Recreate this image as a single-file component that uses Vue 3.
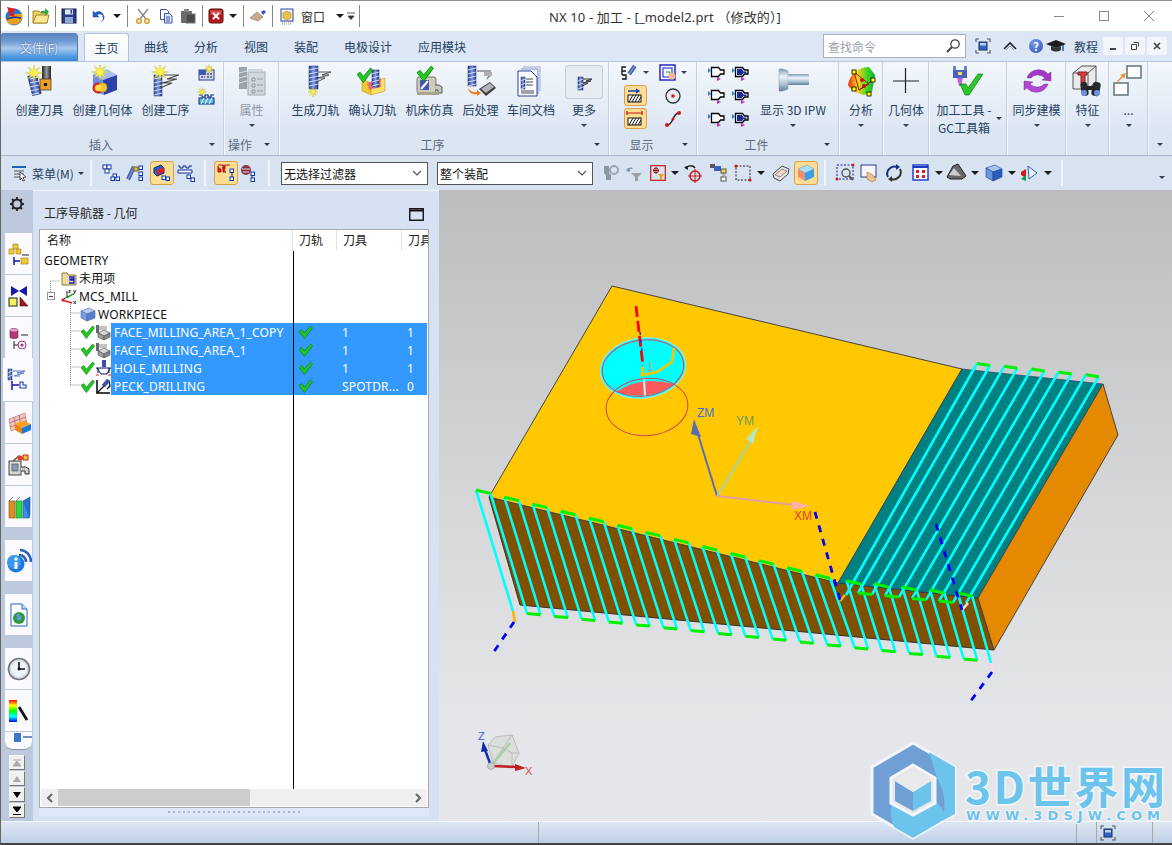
<template>
  <div class="nx-window">
    <svg class="defs" width="0" height="0">
      <defs>
        <linearGradient id="gBlue" x1="0" y1="0" x2="1" y2="0"><stop offset="0" stop-color="#2c3f90"/><stop offset=".5" stop-color="#7f9be6"/><stop offset="1" stop-color="#24357c"/></linearGradient>
        <linearGradient id="gDark" x1="0" y1="0" x2="1" y2="0"><stop offset="0" stop-color="#222"/><stop offset=".5" stop-color="#999"/><stop offset="1" stop-color="#222"/></linearGradient>
        <linearGradient id="gSteel" x1="0" y1="0" x2="0" y2="1"><stop offset="0" stop-color="#7f9cb0"/><stop offset=".35" stop-color="#eef5fa"/><stop offset=".7" stop-color="#a8c0d0"/><stop offset="1" stop-color="#5f8096"/></linearGradient>
        <linearGradient id="gHeat" x1="0" y1="0" x2="1" y2="0"><stop offset="0" stop-color="#e62a10"/><stop offset=".35" stop-color="#ffd020"/><stop offset=".7" stop-color="#40d820"/><stop offset="1" stop-color="#10a840"/></linearGradient>
        <linearGradient id="gRainbow" x1="0" y1="0" x2="0" y2="1"><stop offset="0" stop-color="#f00"/><stop offset=".25" stop-color="#ff0"/><stop offset=".5" stop-color="#0f0"/><stop offset=".75" stop-color="#0ff"/><stop offset="1" stop-color="#00f"/></linearGradient>
      </defs>
    </svg>

    <header class="titlebar">
      <div class="qat">
        <template v-for="(q, i) in quickItems" :key="i">
          <span v-if="q.t === 'sep'" class="qsep" :style="{ width: q.w + 'px' }"><i></i></span>
          <span v-else-if="q.t === 'caret'" class="slot" :style="{ width: q.w + 'px' }"><b class="caret"></b></span>
          <span v-else-if="q.t === 'text'" class="qtext">{{ q.text }}</span>
          <span v-else class="slot" :style="{ width: q.w + 'px' }"><Ic :name="q.icon" /></span>
        </template>
      </div>
      <div class="title">NX 10 - 加工 - [_model2.prt （修改的）]</div>
      <div class="win-controls">
        <span class="wc"><svg width="12" height="12"><path d="M1 6.5h10" stroke="#888" /></svg></span>
        <span class="wc"><svg width="12" height="12"><rect x="1.5" y="1.5" width="9" height="9" fill="none" stroke="#888" /></svg></span>
        <span class="wc"><svg width="12" height="12"><path d="M1 1l10 10M11 1L1 11" stroke="#888" /></svg></span>
      </div>
    </header>

    <nav class="tabbar">
      <div class="file-btn">文件(F)</div>
      <div class="tabs">
        <span v-for="t in tabs" :key="t" class="tab" :class="{ active: t === '主页' }">{{ t }}</span>
      </div>
      <div class="tab-right">
        <div class="search">
          <span>查找命令</span>
          <svg width="16" height="16" viewBox="0 0 16 16" fill="none">
            <circle cx="10" cy="6" r="4.2" stroke="#444" stroke-width="1.3" fill="#fff" />
            <path d="M7 9l-5 5" stroke="#444" stroke-width="2" />
          </svg>
        </div>
        <span class="tr-ic first"><Ic name="frame" /></span>
        <span class="tr-ic chev"><svg width="14" height="10" viewBox="0 0 14 10" fill="none"><path d="M1 8l6-6 6 6" stroke="#222" stroke-width="1.6" /><path d="M3 9l4-4 4 4" stroke="#999" /></svg></span>
        <span class="tr-ic help">?</span>
        <span class="tr-ic hat"><Ic name="hat" /></span>
        <span class="tut">教程</span>
        <span class="mini"><svg width="10" height="10"><path d="M2 8h6" stroke="#444" stroke-width="2" /></svg></span>
        <span class="mini"><svg width="10" height="10" fill="none"><path d="M3.5 1.5h5v4M1.5 3.5h5v5h-5z" stroke="#444" /></svg></span>
        <span class="mini"><svg width="10" height="10"><path d="M2 2l6 6M8 2l-6 6" stroke="#444" stroke-width="1.7" /></svg></span>
      </div>
    </nav>

    <section class="ribbon">
      <div v-for="g in groups" :key="g.id" class="group" :class="{ nosep: g.last }" :style="{ width: g.w + 'px' }">
        <div class="group-body" :style="{ paddingLeft: (g.pad || 0) + 'px' }">
          <template v-for="(it, n) in g.items" :key="n">
            <div v-if="it.grid" class="small-grid" :style="{ width: it.w + 'px', gridTemplateColumns: it.cols }">
              <span v-for="(c, k) in it.grid" :key="k" class="cell" :class="{ on: c.on }">
                <Ic :name="c.icon" /><b v-if="c.caret" class="caret sm"></b>
              </span>
            </div>
            <div v-else class="big" :class="{ dim: it.dim, two: it.lines }" :style="{ width: it.w + 'px' }">
              <span class="big-ic" :class="{ boxed: it.boxed }"><Ic :name="it.icon" /></span>
              <span v-if="it.lines" class="big-label">{{ it.lines[0] }}<br />{{ it.lines[1] }}</span>
              <span v-else class="big-label">{{ it.label }}</span>
              <b v-if="it.caret" class="caret sm"></b>
            </div>
          </template>
        </div>
        <div class="group-foot">
          <span class="foot-label">{{ g.label }}</span>
          <b v-if="g.launcher" class="caret sm launcher"></b>
        </div>
      </div>
    </section>

    <section class="toolbar">
      <div class="menu-btn"><Ic name="menu" /><span>菜单(M)</span><b class="caret sm"></b></div>
      <template v-for="(b, i) in toolItems" :key="i">
        <span v-if="b.t === 'sep'" class="tsep" :style="{ width: b.w + 'px' }"><i></i></span>
        <span v-else-if="b.t === 'gap'" :style="{ width: b.w + 'px' }"></span>
        <span v-else-if="b.t === 'caret'" class="slot" :style="{ width: b.w + 'px' }"><b class="caret"></b></span>
        <div v-else-if="b.t === 'select'" class="select" :style="{ width: b.w + 'px' }">
          <span>{{ b.text }}</span>
          <svg width="12" height="8" viewBox="0 0 12 8" fill="none"><path d="M2 2l4 4 4-4" stroke="#555" stroke-width="1.2" /></svg>
        </div>
        <span v-else class="slot" :class="{ on: b.on }" :style="{ width: b.w + 'px' }"><Ic :name="b.icon" /></span>
      </template>
      <b class="caret sm tb-end"></b>
    </section>

    <main class="workspace">
      <aside class="rail">
        <div class="gear">
          <svg width="18" height="18" viewBox="0 0 18 18" fill="none">
            <circle cx="9" cy="9" r="4.5" stroke="#222" stroke-width="2" />
            <path d="M9 2v2.5M9 13.5V16M2 9h2.5M13.5 9H16M4 4l1.8 1.8M12.2 12.2L14 14M14 4l-1.8 1.8M5.8 12.2L4 14" stroke="#222" stroke-width="1.8" />
          </svg>
        </div>
        <div v-for="r in railItems" :key="r.icon" class="rail-btn" :class="[{ active: r.active }, r.cls]">
          <Ic :name="r.icon" />
        </div>
        <div class="rail-cut"><svg width="28" height="18" viewBox="0 0 28 18"><rect x="9" y="1" width="7" height="9" fill="#3a78d0" /><path d="M18 5h10" stroke="#4a6aa0" stroke-width="1.5" /></svg></div>
        <div class="rail-scroll">
          <span class="rs off"><svg width="10" height="10"><path d="M1 2h8M5 3l-4 5h8z" fill="#aaa" stroke="#aaa" /></svg></span>
          <span class="rs off"><svg width="10" height="10"><path d="M5 2l-4 6h8z" fill="#aaa" /></svg></span>
          <span class="rs"><svg width="10" height="10"><path d="M1 2h8l-4 6z" fill="#000" /></svg></span>
          <span class="rs"><svg width="10" height="10"><path d="M1 1h8l-4 5zM1 8.5h8" fill="#000" stroke="#000" /></svg></span>
        </div>
      </aside>

      <section class="navigator">
        <div class="nav-head">
          <span>工序导航器 - 几何</span>
          <svg width="15" height="13"><rect x=".75" y=".75" width="13.5" height="11.5" fill="none" stroke="#111" stroke-width="1.4" /><path d="M1 2.5h13" stroke="#111" stroke-width="2" /></svg>
        </div>
        <div class="tree">
          <div class="tree-header">
            <span class="th name">名称</span>
            <span class="th path">刀轨</span>
            <span class="th tool">刀具</span>
            <span class="th more">刀具</span>
          </div>
          <div class="tree-body">
            <svg class="tree-lines" width="60" height="140" fill="none">
              <path d="M10.5 30V44M10.5 30H20" stroke="#888" stroke-dasharray="1 1" />
              <path d="M30.5 53V135M30.5 62H40M30.5 80H41M30.5 98H41M30.5 116H41M30.5 134H41" stroke="#888" stroke-dasharray="1 1" />
            </svg>
            <div class="vline"></div>
            <div class="row lv0"><span class="label">GEOMETRY</span></div>
            <div class="row lv1"><Ic name="folder" /><span class="label">未用项</span></div>
            <div class="row lv1b">
              <span class="minus"></span><Ic name="mcs" /><span class="label">MCS_MILL</span>
            </div>
            <div class="row lv2"><Ic name="workpiece" /><span class="label">WORKPIECE</span></div>
            <div v-for="op in operations" :key="op.name" class="row op">
              <Ic name="check" /><Ic :name="op.icon" />
              <div class="sel">
                <span class="op-name">{{ op.name }}</span>
                <span class="op-path"><Ic name="check" /></span>
                <span class="op-tool">{{ op.tool }}</span>
                <span class="op-more">{{ op.more }}</span>
              </div>
            </div>
          </div>
          <div class="hscroll">
            <svg width="8" height="10"><path d="M6 1L2 5l4 4" fill="none" stroke="#666" stroke-width="2" /></svg>
            <div class="track"><div class="thumb"></div></div>
            <svg width="8" height="10"><path d="M2 1l4 4-4 4" fill="none" stroke="#666" stroke-width="2" /></svg>
          </div>
        </div>
        <div class="grip"><i v-for="n in 27" :key="n"></i></div>
      </section>

      <section class="viewport">
        <svg class="scene" viewBox="439 190 733 632" width="733" height="632" fill="none">
          <polygon points="489,497 838,583 978,598 994,650 520,605" fill="#7f5000" stroke="#333" />
          <polygon points="612,286 962,369 838,583 489,497" fill="#ffc800" stroke="#444" />
          <polygon points="962,369 1103,384 978,598 838,583" fill="#008080" stroke="#335" stroke-width=".6" />
          <polygon points="1103,384 1118,435 994,650 978,598" fill="#e58a00" stroke="#444" />

          <path :d="cyanFront" stroke="#00ffff" stroke-width="2.6" stroke-linejoin="round" />
          <path :d="cyanTeal" stroke="#00ffff" stroke-width="2.6" stroke-linejoin="round" />
          <path :d="greenCaps" stroke="#00f000" stroke-width="3" />
          <path d="M513 611L515 622" stroke="#ffb400" stroke-width="2.6" />
          <path d="M840 601L845 595" stroke="#ffb400" stroke-width="2.6" />
          <path d="M991 663L993 672M962 610L968 603" stroke="#ffd8e8" stroke-width="2.6" />
          <path d="M514 622L493 653" stroke="#0000ff" stroke-width="2.8" stroke-dasharray="7 7" />
          <path d="M992 672L970 702" stroke="#0000ff" stroke-width="2.8" stroke-dasharray="7 7" />
          <path d="M815 512L840 600" stroke="#0000ff" stroke-width="2.8" stroke-dasharray="7 7" />
          <path d="M936 524L962 610" stroke="#0000ff" stroke-width="2.8" stroke-dasharray="7 7" />

          <ellipse cx="643" cy="368" rx="43" ry="30" transform="rotate(-8 643 368)" fill="#00ffff" stroke="#90f0f0" />
          <path d="M616 392Q640 375 674 384Q650 402 616 392z" fill="#ff5a5a" />
          <path d="M644 378L645 397" stroke="#bff" stroke-width="2" />
          <ellipse cx="643" cy="368" rx="41" ry="28" transform="rotate(-8 643 368)" stroke="#d84060" />
          <ellipse cx="647" cy="407" rx="41" ry="28.5" transform="rotate(-5 647 407)" stroke="#d84050" />
          <path d="M643 367L642 375L657 372L672 362L674 348" stroke="#ffc000" stroke-width="2.6" />
          <path d="M636 306L643 366" stroke="#ff0000" stroke-width="2.8" stroke-dasharray="11 4" />
          <path d="M640 332L642 352" stroke="#2030d0" stroke-width="1.5" stroke-dasharray="3 5" />
          <text x="647" y="371" class="s-txt" fill="#a8a860">1</text>

          <path d="M717 496L697 431" stroke="#5a6eb8" stroke-width="2" />
          <path d="M694 419L701 437L691 434z" fill="#5a6eb8" />
          <path d="M717 496L751 441" stroke="#8fd6c8" stroke-width="1.6" />
          <path d="M758 426L753 444L746 439z" fill="#b8e8c0" />
          <path d="M717 496L795 505" stroke="#e0a0a0" stroke-width="2" />
          <path d="M811 506L791 510L792 501z" fill="#ffb0a8" />
          <text x="697" y="417" class="s-txt" fill="#3c6ee0">ZM</text>
          <text x="736" y="425" class="s-txt" fill="#6f9a60">YM</text>
          <text x="794" y="520" class="s-txt" fill="#d84040">XM</text>

          <g stroke="#bbb" stroke-width="1" fill="#dcdedc">
            <polygon points="495,737 512,735 519,753 512,767 493,763 488,745" />
            <path d="M503 748L512 735M503 748L512 753L519 753M512 753L512 767M503 748L493 763M503 748L488 745" fill="none" />
          </g>
          <path d="M491 766L510 743" stroke="#a8d0a8" stroke-width="2.5" />
          <path d="M491 766L484 747" stroke="#1030b0" stroke-width="2.5" />
          <path d="M483 741L488 751L481 752z" fill="#1030b0" />
          <path d="M491 766L518 767" stroke="#c02020" stroke-width="2.5" />
          <path d="M526 768L515 771L515 764z" fill="#c02020" />
          <circle cx="491" cy="766" r="3.5" fill="#ccc" stroke="#888" stroke-width=".5" />
          <text x="478" y="740" class="t-txt" fill="#3a60e0">Z</text>
          <text x="525" y="775" class="t-txt" fill="#d05050">X</text>
        </svg>
      </section>
    </main>

    <footer class="statusbar">
      <span class="st one"></span>
      <span class="st two"></span>
      <span class="st three"></span>
      <span class="st four"><Ic name="frame" /></span>
    </footer>

    <svg class="watermark" width="312" height="110" viewBox="860 735 312 110">
      <polygon points="913,743 955,767 955,814 913,838 872,814 872,767" fill="#6f9fd4" stroke="#f2f6fa" stroke-width="3" />
      <path d="M929 752L955 767V814L942 821Q949 798 937 778z" fill="#6cc4ec" />
      <path d="M892 803L913 815L936 802Q950 814 940 822L913 838L894 827Q889 815 892 803z" fill="#6cc4ec" />
      <polygon points="913,765 935,778 935,803 913,815 891,803 891,778" fill="#e6e7ea" stroke="#f4f7fa" stroke-width="3" />
      <polygon points="913,792 895,781 895,801 913,811" fill="#6f9fd4" />
      <polygon points="913,792 931,781 931,801 913,811" fill="#6cc4ec" />
      <polygon points="913,771 931,781 913,792 895,781" fill="#e8eaec" />
      <text class="wm-big" x="965" y="804" textLength="200">3D世界网</text>
      <text class="wm-small" x="966" y="820" textLength="194">WWW.3DSJW.COM</text>
    </svg>
  </div>
</template>

<script setup>
import { h, computed } from 'vue'

// little drawing helpers for the bitmap-style NX icons
const star = (x, y, r) => {
  const p = []
  for (let i = 0; i < 16; i++) {
    const a = (i * Math.PI) / 8
    const q = i % 2 ? r * 0.36 : r
    p.push((x + q * Math.cos(a)).toFixed(1) + ',' + (y + q * Math.sin(a)).toFixed(1))
  }
  return `<polygon points="${p.join(' ')}" fill="#fff24a" stroke="#b8b030" stroke-width=".4"/>`
}
const mill = (x, y, w, hh) => {
  let s = `<rect x="${x}" y="${y}" width="${w}" height="${hh}" fill="url(#gBlue)" stroke="#1e2c6a" stroke-width=".5"/>`
  for (let yy = y + 3; yy < y + hh; yy += 4) s += `<path d="M${x} ${yy + 1}L${x + w} ${yy - 1}" stroke="#dfe8ff" stroke-width=".9"/>`
  return s
}
const check = (x, y, k = 1) => `<path transform="translate(${x} ${y}) scale(${k})" d="M0 6l3-2 3 4 7-8 2 2-9 12z" fill="#20c820" stroke="#0a7a0a" stroke-width=".7"/>`
const gnode = (x, y) => `<rect x="${x}" y="${y}" width="3.5" height="3.5" fill="#fff" stroke="#0a3ab0"/>`
const blank = (inner) => '<path d="M3.5 3.5h7l2 2.5h3.5v4h-3.5l-2 2.5h-7z" fill="#fff" stroke="#000" stroke-width="1.3"/>' + inner

const icons = {
  logo: [20, '<circle cx="10" cy="11" r="8.5" fill="#2276c8"/><path d="M2 13Q9 7 18 8Q19 14 14 18Q7 20 3 16z" fill="#e8a020"/><path d="M3 13Q10 10 17 12" stroke="#103a90" stroke-width="1.5" fill="none"/><path d="M3 1l9 2-3 3 2 5-5-1-1-4z" fill="#e01c28"/>'],
  open: [18, '<path d="M1 4h6l2 2h6v10H1z" fill="#f0d060" stroke="#a88830"/><path d="M1 16l3-8h13l-2 8z" fill="#ffe890" stroke="#a88830"/><path d="M9 4h4V1l4 4-4 4V6H9z" fill="#30a840"/>'],
  save: [16, '<rect x="1" y="1" width="14" height="14" fill="#2a3f80" stroke="#14204c"/><rect x="4" y="1.5" width="8" height="5" fill="#dfe6f4"/><rect x="4" y="9" width="8" height="6" fill="#8fa8d8"/><rect x="9.5" y="2" width="1.6" height="3.5" fill="#2a3f80"/>'],
  undo: [16, '<path d="M2 3v6h6L6 7c3-2 6-1 7 3-.2-6-5-8-9-5z" fill="#2060c8" stroke="#103a80" stroke-width=".4"/><path d="M11 8c2 2 1 5-2 6 3 0 5-3 4-6z" fill="#2060c8"/>'],
  cut: [16, '<path d="M3 1l8 10M13 1L5 11" stroke="#888" stroke-width="1.4"/><circle cx="4" cy="13" r="2.2" fill="none" stroke="#d89a20" stroke-width="1.5"/><circle cx="12" cy="13" r="2.2" fill="none" stroke="#d89a20" stroke-width="1.5"/>'],
  copy: [16, '<path d="M2.5 1.5h6l2 2v8h-8z" fill="#fff" stroke="#3a50a8"/><path d="M6.5 5.5h5l2.5 2.5v7h-7.5z" fill="#e0e8ff" stroke="#3a50a8"/><path d="M8 9h4M8 11h4M8 13h4" stroke="#3a50a8"/>'],
  paste: [16, '<rect x="1" y="3" width="11" height="12" rx="1" fill="#6a6a6a"/><rect x="4" y="1" width="5" height="3" fill="#888"/><rect x="6" y="6" width="9" height="9" fill="#4a4a4a" stroke="#777"/>'],
  closeX: [16, '<rect x="1" y="1" width="14" height="14" rx="2" fill="#b01c1c" stroke="#5c1010"/><rect x="2.5" y="2.5" width="11" height="4" fill="#d85050"/><path d="M5 5l6 6M11 5l-6 6" stroke="#fff" stroke-width="2"/>'],
  brush: [18, '<path d="M1 11l7-6 6 5-5 4z" fill="#c8ad88" stroke="#6a5a48" stroke-width=".5"/><path d="M12 5l3-2 2 2-3 3z" fill="#3050c0"/>'],
  winCube: [18, '<rect x="2" y="2" width="12" height="12" fill="#eef" stroke="#2a4a98"/><path d="M8 4l4 2v5l-4 2-4-2V6z" fill="#f0c040" stroke="#a08020" stroke-width=".5"/><path d="M3 15h11M3 17h9" stroke="#888" stroke-dasharray="1 1"/>'],
  lineCaret: [10, '<path d="M1 2h8M2 5h6l-3 3.5z" fill="#333" stroke="#333" stroke-width=".8"/>'],
  frame: [16, '<path d="M1 4V1h3M12 1h3v3M15 12v3h-3M4 15H1v-3" fill="none" stroke="#555" stroke-width="1.1"/><rect x="4" y="4" width="8" height="8" fill="#2f66c8" stroke="#1a2f60"/><rect x="5" y="5" width="6" height="2.5" fill="#b8d0f4"/>'],
  hat: [20, '<path d="M0 8l10-4 10 4-10 4z" fill="#1c1c1c"/><path d="M5 10v4c3 2 7 2 10 0v-4l-5 2z" fill="#333"/><path d="M17 9v6" stroke="#2050d0" stroke-width="1.5"/>'],

  createTool: [32, mill(6, 10, 9, 20).replace('<rect', '<rect transform="rotate(-14 10 20)"') + '<rect x="18" y="1" width="9" height="15" fill="url(#gDark)"/><rect x="16" y="14" width="11" height="11" fill="#f0a020" stroke="#333" stroke-width=".7"/><circle cx="21.5" cy="19.5" r="1.8" fill="#111"/>' + star(10, 8, 8.5)],
  createGeom: [32, '<polygon points="6,9 20,4 30,10 16,15" fill="#a9c0f0"/><polygon points="16,15 30,10 30,25 17,30" fill="#2c40a8"/><polygon points="6,9 16,15 17,30 6,26" fill="#6f8ce4"/><ellipse cx="11" cy="23" rx="5" ry="5" fill="#f03020" stroke="#b02010"/><rect x="11" y="18" width="9" height="9" rx="4" fill="#f2c830" stroke="#a08020" stroke-width=".5"/><ellipse cx="11" cy="23" rx="3" ry="3" fill="#ffe050"/>' + star(13, 7, 8.5)],
  createOp: [32, mill(4, 10, 8, 21) + '<path d="M11 10h18l-12 4h10l-15 4h10l-12 5" fill="none" stroke="#444" stroke-width="1.1"/>' + star(10, 7, 8.5)],
  insA: [18, '<rect x="2" y="6" width="15" height="10" fill="#cfd8f0" stroke="#2a3f90"/><rect x="2" y="6" width="7" height="5" fill="#3f5ab0"/><path d="M10 10h6M10 13h6M4 13h4" stroke="#111" stroke-dasharray="2 1"/>' + star(12, 5, 4.5)],
  insB: [18, '<path d="M2 8h3v2h3V8h3v2h3V8h3" fill="none" stroke="#0a2a90" stroke-width="1.2"/><rect x="2" y="11" width="15" height="6" fill="#58b8d8" stroke="#0a2a90"/><path d="M4 17l3-6M8 17l3-6M12 17l3-6" stroke="#fff"/>' + star(5, 5, 4.5)],
  attr: [32, '<rect x="3" y="2" width="8" height="22" fill="#9ba4ac"/><path d="M3 8l8-2M3 13l8-2M3 18l8-2" stroke="#d8dde2"/><rect x="12" y="7" width="17" height="23" fill="#d2d8de" stroke="#a4acb4"/><path d="M16 13h3v3h-3zM16 19h3v3h-3zM16 25h3v3h-3zM21 14h6M21 20h6M21 26h6" fill="none" stroke="#909aa4"/><path d="M12 5h15" stroke="#b0b8c0"/>'],
  genPath: [32, mill(9, 1, 9, 23) + '<path d="M18 7h13l-9 3h7l-11 3h7l-8 4" fill="none" stroke="#555"/>' + star(13, 27, 5)],
  confirm: [32, '<polygon points="5,14 14,18 14,30 5,26" fill="#f0c830" stroke="#a89020" stroke-width=".5"/><polygon points="14,18 28,13 28,26 14,30" fill="#ffe060" stroke="#a89020" stroke-width=".5"/><polygon points="10,18 24,13 24,22 12,25" fill="#e84090" opacity=".6"/>' + mill(15, 5, 7, 17) + check(0, 3, 1.05)],
  sim: [32, '<rect x="3" y="12" width="19" height="16" rx="2" fill="#d0cab8" stroke="#777"/><rect x="6" y="15" width="9" height="10" fill="#3f5ab0"/><path d="M7 24l7-8" stroke="#fff" stroke-width="2"/><path d="M21 20h4l3 2v6h-4v-3h-3" fill="#c8c8c0" stroke="#555"/><rect x="3" y="27" width="22" height="3" fill="#a8a490"/>' + check(3, 1, 1.1)],
  post: [32, mill(3, 1, 8, 20) + '<path d="M3 23q3 5 9 4v-2l4 3-4 3v-2q-8 1-9-6z" fill="#f07820"/><path d="M12 6h13v5h-1l-2 3" fill="none" stroke="#888" stroke-width="1.4"/><rect x="19" y="7" width="8" height="4" fill="#b0b0b0"/><polygon points="14,24 25,17 31,23 21,31" fill="#403c38"/><polygon points="16,24 25,18 29,22 21,28" fill="#b0b4ba"/>'],
  doc: [32, '<path d="M8 2h17v24" fill="none" stroke="#a0a8d8"/><path d="M6 4h17v25" fill="none" stroke="#8090d0"/><path d="M3 6h13l6 6v19H3z" fill="#fff" stroke="#2a3f98"/>' + mill(6, 12, 4, 12) + '<path d="M11 14h7M11 17h7M11 20h7M6 26h13M6 28h13" stroke="#445"/>'],
  more: [18, mill(3, 4, 5, 13) + '<path d="M8 6h9l-6 2h5l-8 2h5l-6 3" fill="none" stroke="#333"/>'],
  showA: [18, '<path d="M5 3H1v4h4M1 11h4v4H1" fill="none" stroke="#111" stroke-width="1.3"/><path d="M1 7v4" stroke="#111" stroke-width="1.3"/>' + '<rect x="9" y="1" width="4" height="10" transform="rotate(35 11 6)" fill="url(#gBlue)"/>'],
  showB: [18, '<rect x="1" y="1" width="15" height="15" fill="#f8f8ff" stroke="#1818c8" stroke-width="1.4"/><rect x="4" y="4" width="9" height="9" fill="none" stroke="#1818c8"/><path d="M7 8h4v4" stroke="#20b020" fill="none"/><circle cx="13" cy="12" r="3.5" fill="#f0b890"/>'],
  hatchA: [20, '<path d="M3 5h11M11 3l3 2-3 2" fill="none" stroke="#1040c0" stroke-width="1.3"/><rect x="3" y="9" width="13" height="7" fill="#fff" stroke="#111"/><path d="M4 16l4-7M7 16l4-7M10 16l4-7M13 16l3-5" stroke="#111"/>'],
  hatchB: [20, '<path d="M2 4h15M2 2v4M17 2v4" fill="none" stroke="#d01010" stroke-width="1.2"/><rect x="3" y="9" width="13" height="7" fill="#fff" stroke="#111"/><path d="M4 16l4-7M7 16l4-7M10 16l4-7M13 16l3-5" stroke="#111"/>'],
  target: [18, '<circle cx="9" cy="9" r="7" fill="none" stroke="#333" stroke-width="1.3"/><circle cx="9" cy="9" r="1.8" fill="#d01818"/>'],
  curve: [18, '<path d="M3 15C10 15 8 3 15 3" fill="none" stroke="#222" stroke-width="1.4"/><circle cx="3" cy="15" r="2" fill="#d01818"/><circle cx="15" cy="3" r="2" fill="#d01818"/><circle cx="9" cy="9" r="1.5" fill="#d01818"/>'],
  blankA: [18, blank('<path d="M0 4l3 2.5L0 9z" fill="#2a80d0"/><path d="M9 13l4 2-4 2z" fill="#c030c0"/>')],
  blankB: [18, blank('<path d="M5 5h5l1.5 2.5h3v1.5h-3L10 11H5z" fill="#1c2c90"/><path d="M0 4l3 2.5L0 9z" fill="#2a80d0"/><path d="M9 13l4 2-4 2z" fill="#c030c0"/>')],
  ipw: [32, '<path d="M2 4q3-1 9 2v18q-6 3-9 2z" fill="url(#gSteel)" stroke="#7a8a98" stroke-width=".4"/><rect x="11" y="9" width="21" height="11" rx="1" fill="url(#gSteel)"/>'],
  analysis: [32, '<path d="M3 20C5 8 14 2 24 2l6 8-3 17-8 3C12 28 6 26 3 20z" fill="url(#gHeat)"/><path d="M9 7l5 18 10-6zM14 25l14-10" fill="none" stroke="#b01010"/><circle cx="17" cy="15" r="2" fill="#c81010"/><circle cx="19" cy="21" r="2" fill="#c81010"/><rect x="7" y="5" width="4" height="4" fill="#ff0" stroke="#000" stroke-width=".8"/><rect x="7" y="22" width="4" height="4" fill="#ff0" stroke="#000" stroke-width=".8"/><rect x="26" y="13" width="4" height="4" fill="#ff0" stroke="#000" stroke-width=".8"/><rect x="22" y="27" width="4" height="4" fill="#ff0" stroke="#000" stroke-width=".8"/>'],
  plus: [32, '<path d="M3 16h26M15.5 3v25" stroke="#222" stroke-width="1.2"/>'],
  gc: [32, '<rect x="1" y="1" width="3" height="5" fill="#6a80d0"/><rect x="12" y="1" width="3" height="5" fill="#6a80d0"/><rect x="1" y="5" width="14" height="8" fill="#4a60c0"/><rect x="6" y="7" width="4" height="3" fill="#f0e050"/><path d="M5 13h6l-2 8H7z" fill="#c060e0"/><path d="M8 19l5 11h4L31 9l-5 0-10 14-2-4z" fill="#2cc828" stroke="#0c7a10" stroke-width=".7"/>'],
  sync: [32, '<path d="M6 13C9 4 21 2 27 9l3-2v9l-9-1 3-2C20 9 13 9 10 13z" fill="#a438c8" stroke="#6a1c90" stroke-width=".4"/><path d="M27 19C24 28 12 30 6 23l-3 2v-9l9 1-3 2c4 4 11 4 14 0z" fill="#b048d4" stroke="#6a1c90" stroke-width=".4"/>'],
  feature: [32, '<polygon points="1,8 10,1 24,1 24,17 16,24 1,24" fill="#e8eaec" stroke="#555"/><path d="M1 8h15v16M16 8l8-7" fill="none" stroke="#555"/><path d="M6 7h9v3H13v8h-4v-8H6z" fill="#d84040" stroke="#802020"/><rect x="9" y="17" width="7" height="14" rx="3" transform="rotate(-10 12 24)" fill="#28282e"/><rect x="20" y="17" width="8" height="14" rx="3" transform="rotate(10 24 24)" fill="#28282e"/><circle cx="12" cy="28" r="3" fill="#7090e0"/><circle cx="25" cy="28" r="3" fill="#7090e0"/><rect x="15" y="21" width="7" height="4" fill="#222"/>'],
  swap: [32, '<rect x="14" y="1" width="14" height="12" fill="#fff" stroke="#6a7a80" stroke-width="1.6"/><rect x="1" y="18" width="14" height="12" fill="#fff" stroke="#6a7a80" stroke-width="1.6"/><path d="M4 16l5-5-2-1 6-2-2 6-1-2-5 5z" fill="#f09020"/>'],

  menu: [18, '<path d="M1 3h14" stroke="#2060c0" stroke-width="2"/><path d="M3 7h10M3 10h10M3 13h7" stroke="#555"/><path d="M9 8l6 5-3 .5 1.5 3-1.5.5-1.5-3-1.5 2z" fill="#fff" stroke="#111" stroke-width=".7"/>'],
  filtA: [18, '<rect x="1" y="1" width="4" height="4" fill="#fff" stroke="#1838a0"/><rect x="5" y="1" width="4" height="4" fill="#fff" stroke="#1838a0"/><rect x="3" y="5" width="4" height="4" fill="#fff" stroke="#1838a0"/>' + gnode(11, 10) + gnode(14, 13) + gnode(9, 13)],
  filtB: [18, '<rect x="3" y="2" width="4" height="14" transform="rotate(25 5 9)" fill="url(#gBlue)"/><rect x="8" y="3" width="4" height="4" fill="#f0c030" stroke="#806010"/>' + gnode(13, 2) + gnode(13, 8) + gnode(13, 13)],
  filtC: [18, '<polygon points="1,4 8,1 11,4 11,9 4,12 1,9" fill="#2060d0" stroke="#102860"/><polygon points="4,6 11,3 11,8 4,11" fill="#d82020"/>' + gnode(9, 12) + gnode(13, 13)],
  filtD: [18, '<path d="M1 2h2v2h3V2h3v2h3V2h3" fill="none" stroke="#0a2a90"/><path d="M1 6h14v3H1z" fill="#fff" stroke="#0a2a90"/>' + gnode(10, 11) + gnode(14, 14)],
  filtE: [18, '<path d="M1 1h5v4h2V1h5M1 2v6h3V5M6 3v5h3" fill="#e02020" stroke="#b01010"/><path d="M15 6v9" stroke="#0a2a90"/>' + gnode(13, 5) + gnode(13, 13)],
  filtF: [18, '<circle cx="6" cy="6" r="5" fill="#903040"/><path d="M2 5l8 0M3 8h6" stroke="#ddd"/><path d="M12 9v6" stroke="#0a2a90"/>' + gnode(11, 8) + gnode(11, 14)],
  gTool: [18, '<path d="M2 2h5v7l2 2v5H4v-5L2 9z" fill="#8898a0"/><circle cx="12" cy="6" r="4" fill="none" stroke="#9aa8b0" stroke-width="2"/>'],
  gFilter: [18, '<path d="M1 6c3-3 6-3 7-1h-3c1 3-2 4-4 1z" fill="#7a9ab8"/><path d="M6 9h11l-4 4v4h-3v-4z" fill="#9aa0a4"/>'],
  sFilter: [16, '<rect x=".7" y=".7" width="14.6" height="14.6" fill="none" stroke="#c81818" stroke-width="1.2"/><circle cx="6" cy="5.5" r="2.4" fill="none" stroke="#a01010"/><path d="M6 2v7M3 5.5h6" stroke="#a01010"/><path d="M8 9h6l-2 3v3h-2v-3z" fill="#e8a010"/>'],
  rotSnap: [20, '<path d="M3 6c1-4 7-4 9-1" fill="none" stroke="#222" stroke-width="1.5"/><path d="M1 4l4-1v4z" fill="#222"/><circle cx="12" cy="13" r="5" fill="none" stroke="#c81818" stroke-width="1.5"/><path d="M12 6v14M5 13h14" stroke="#c81818"/>'],
  binoc: [20, '<rect x="1" y="1" width="5" height="4" fill="#555"/><rect x="5" y="3" width="7" height="5" fill="#3a60c0"/><path d="M14 7v11M14 12h3" stroke="#999"/><rect x="12" y="6" width="5" height="4" fill="#f0d050" stroke="#555"/><rect x="12" y="14" width="5" height="4" fill="#fff" stroke="#555"/>'],
  rectSel: [20, '<rect x="3" y="3" width="14" height="14" fill="none" stroke="#222" stroke-dasharray="2 1.5"/><circle cx="3" cy="3" r="1.6" fill="#d01818"/><circle cx="17" cy="17" r="1.6" fill="#d01818"/>'],
  eraser: [20, '<path d="M2 11L11 3l7 3-1 5-8 7-6-3z" fill="#e8e8e8" stroke="#444"/><path d="M4 12l7-6 5 2-7 6z" fill="#f4d8d0" stroke="#888"/>'],
  cubeOn: [20, '<polygon points="2,6 11,2 18,6 9,10" fill="#a8e0ff" stroke="#5a90c0" stroke-width=".5"/><polygon points="2,6 9,10 9,18 2,14" fill="#f09070"/><polygon points="9,10 18,6 18,14 9,18" fill="#38a0e8"/>'],
  fitA: [20, '<rect x="2" y="2" width="16" height="14" fill="none" stroke="#1020a0" stroke-dasharray="2 1.5"/><circle cx="11" cy="10" r="4" fill="none" stroke="#555" stroke-width="1.4"/><path d="M14 13l4 4" stroke="#555" stroke-width="2"/><circle cx="2" cy="16" r="1.5" fill="#d01818"/><circle cx="18" cy="2" r="1.5" fill="#d01818"/>'],
  pan: [20, '<rect x="2" y="2" width="15" height="12" fill="#f4f6fc" stroke="#2a3a90"/><path d="M8 9l6 3 3 5-4 2-5-3z" fill="#f0c090" stroke="#a07040" stroke-width=".6"/>'],
  rotate: [20, '<path d="M4 14C1 8 7 2 13 4" fill="none" stroke="#1c3080" stroke-width="2"/><path d="M16 6c3 6-3 12-9 10" fill="none" stroke="#333" stroke-width="2"/><path d="M12 1l4 3-4 3z" fill="#1c3080"/><path d="M8 13l-4 3 4 3z" fill="#333"/>'],
  orient: [20, '<rect x="2" y="2" width="15" height="15" fill="#fff" stroke="#1838c8" stroke-width="1.4"/><path d="M2 4h15" stroke="#1838c8" stroke-width="2"/><path d="M5 7h3v3H5zM11 7h3v3h-3zM5 12h3v3H5zM11 12h3v3h-3z" fill="#d82020"/>'],
  shade: [22, '<path d="M1 15L7 4l5-2 8 12-4 3H4z" fill="#66696c" stroke="#222"/><path d="M3 13l5-7 7 8z" fill="#ccc"/>'],
  bluecube: [20, '<polygon points="2,5 11,2 18,6 9,9" fill="#a8c4f0" stroke="#1c3c90" stroke-width=".6"/><polygon points="2,5 9,9 9,18 2,14" fill="#6a96e0" stroke="#1c3c90" stroke-width=".6"/><polygon points="9,9 18,6 18,14 9,18" fill="#2c5cc0" stroke="#1c3c90" stroke-width=".6"/>'],
  layer: [20, '<path d="M8 3l9 7-8 6z" fill="#e8f0ff" stroke="#3060b0"/><path d="M1 9l5-3v9l-5-3z" fill="#d01818"/><path d="M1 16l5-4v6z" fill="#10a040"/>'],

  railA: [22, '<path d="M5 1h5v5H5zM1 6h5v5H1zM8 6h5v5H8z" fill="#f0c838" stroke="#a88a20" stroke-width=".7"/><path d="M14 12h7" stroke="#222"/>' + '<path d="M6 14v8M6 18h6" stroke="#1818a8" stroke-width="1.5" fill="none"/><rect x="13" y="15" width="7" height="6" fill="#f0c838" stroke="#a88a20" stroke-width=".7"/>'],
  railB: [22, '<path d="M3 1l8 5 8-5v10l-8-5-8 5z" fill="#1818b0"/><rect x="1" y="13" width="8" height="8" fill="#f4f060" stroke="#222"/><path d="M12 12l8 9h-8z" fill="#b01010" stroke="#222" stroke-width=".6"/><path d="M10.5 9v13" stroke="#fff" stroke-width=".5"/>'],
  railC: [22, '<path d="M2 3c0-2 8-2 8 0v7c0 2-8 2-8 0z" fill="#b03a7a" stroke="#641c40" stroke-width=".6"/><ellipse cx="6" cy="3" rx="4" ry="1.5" fill="#e0a0c8"/><path d="M13 8h7M6 14v8M6 18h4" stroke="#222" stroke-width="1" fill="none"/><circle cx="14" cy="18" r="4" fill="none" stroke="#a03070"/><circle cx="14" cy="18" r="1.6" fill="#a03070"/>'],
  railD: [24, mill(2, 1, 4, 11) + '<path d="M7 3h12l-8 2h7l-10 3h6" fill="none" stroke="#5a80c8"/><path d="M6 13v9M6 17h7" stroke="#1818a8" stroke-width="1.5" fill="none"/><path d="M14 14h3v3h3v3h-6z" fill="#fff" stroke="#1838a8" stroke-width="1.1"/>'],
  railE: [24, '<path d="M2 8L18 2l2 12-16 6z" fill="#f5c8a0" stroke="#9050a0" stroke-width=".5"/><path d="M2 12l17-6M3 16l17-6M7 6l2 12M12 4l2 12" stroke="#a060c0" stroke-width=".8"/><polygon points="8,13 16,10 24,13 15,17" fill="#ffa020"/><polygon points="15,17 24,13 24,19 15,23" fill="#1878d8"/><polygon points="8,13 15,17 15,23 8,19" fill="#f08010"/>'],
  railF: [24, '<rect x="2" y="8" width="12" height="14" fill="#d8d8d0" stroke="#444"/><rect x="5" y="11" width="6" height="7" fill="#8898b8" stroke="#444" stroke-width=".6"/><path d="M14 14h5l3 2v5h-4v-3h-4" fill="#ccc" stroke="#333"/><path d="M6 8l6-5 4 3" fill="none" stroke="#555" stroke-width="1.5"/><circle cx="13" cy="5" r="2.5" fill="#e04020"/><path d="M16 2h5v5h-5z" fill="#f0c040" stroke="#c02020"/>'],
  railG: [24, '<rect x="2" y="6" width="6" height="17" fill="#e08a20" stroke="#805010" stroke-width=".6"/><rect x="9" y="6" width="6" height="17" fill="#30d840" stroke="#108020" stroke-width=".6"/><rect x="16" y="6" width="6" height="17" fill="#3a90e8" stroke="#1050a0" stroke-width=".6"/><path d="M2 6l4-4M9 6l4-4M16 6l7-4v17l-1 4" fill="#2a70c8" stroke="#1050a0" stroke-width=".6"/>'],
  railH: [26, '<circle cx="10" cy="16" r="8.5" fill="#1a78e0"/><circle cx="8" cy="14" r="7" fill="#3a98f0"/><rect x="8.5" y="14" width="3" height="7" fill="#fff"/><circle cx="10" cy="11" r="1.7" fill="#fff"/><path d="M13 7c4 0 7 3 7 7M14 2c6 0 11 5 11 12" fill="none" stroke="#2a60c0" stroke-width="2.6"/>'],
  railI: [24, '<path d="M4 1h11l5 5v17H4z" fill="#fff" stroke="#2a62c8" stroke-width="1"/><path d="M15 1v5h5" fill="#d0e0f8" stroke="#2a62c8"/><circle cx="12" cy="15" r="6" fill="#2f9a3a"/><circle cx="12" cy="15" r="2.5" fill="#5a9ae0"/><path d="M8 13l4-3 1 3" fill="#5a9ae0"/>'],
  railJ: [24, '<circle cx="12" cy="12" r="10.5" fill="#d8e6f8" stroke="#777" stroke-width="1.6"/><circle cx="12" cy="12" r="8.5" fill="#eef4fc" stroke="#bbb" stroke-width=".5"/><path d="M12 5v7h6" fill="none" stroke="#111" stroke-width="1.6"/><circle cx="12" cy="12" r="1.4" fill="#111"/>'],
  railK: [24, '<rect x="2" y="1" width="8" height="22" fill="url(#gRainbow)"/><path d="M12 8l8 13" stroke="#111" stroke-width="2.8"/>'],

  folder: [16, '<path d="M1 3h5l1 2h8v10H1z" fill="#efdc9c" stroke="#8a7a48"/><path d="M8 7h5v2h-4v1h4v3H8" fill="none" stroke="#1020d0" stroke-width="1.3"/>'],
  mcs: [18, '<path d="M7 10V4M7 10l7-3M7 10l-5 3" stroke="#222" fill="none"/><path d="M2 13l10 3" stroke="#e01818" stroke-width="1.5"/><path d="M7 11l6-4" stroke="#20b020" stroke-width="1.5"/><circle cx="3" cy="13" r="1.6" fill="#d01818"/><text x="8" y="6" font-size="6" font-weight="700" font-family="Liberation Sans" fill="#222">z</text><text x="13" y="6" font-size="6" font-weight="700" font-family="Liberation Sans" fill="#222">y</text><text x="13" y="17" font-size="6" font-weight="700" font-family="Liberation Sans" fill="#222">x</text>'],
  workpiece: [16, '<polygon points="1,5 9,2 15,5 7,8" fill="#b8ccf0" stroke="#4a6aa8" stroke-width=".6"/><polygon points="1,5 7,8 7,15 1,12" fill="#7a9ce0" stroke="#4a6aa8" stroke-width=".6"/><polygon points="7,8 15,5 15,12 7,15" fill="#5a7cd0" stroke="#4a6aa8" stroke-width=".6"/>'],
  check: [14, check(0, 1, 0.9)],
  opFace: [16, '<rect x="1" y="1" width="3" height="8" fill="#667"/><path d="M4 3h8M4 5h8" stroke="#888"/><polygon points="3,9 9,6 15,9 9,12" fill="#d8d8d8" stroke="#555" stroke-width=".7"/><polygon points="3,9 9,12 9,16 3,13" fill="#a0a0a0" stroke="#555" stroke-width=".7"/><polygon points="9,12 15,9 15,13 9,16" fill="#888" stroke="#555" stroke-width=".7"/>'],
  opHole: [16, '<rect x="7" y="0" width="4" height="7" fill="#3a50a8"/><path d="M1 8h15M3 8v5M14 8v5" stroke="#0a0a60" fill="none"/><path d="M2 8l4 6h6l3-6" fill="none" stroke="#0a0a60"/><path d="M1 15h3M13 15h3" stroke="#d01818"/>'],
  opPeck: [16, '<path d="M2 2v13h13" fill="none" stroke="#000" stroke-width="1.5"/><path d="M2 15L14 3l1 5-3 3" fill="none" stroke="#000" stroke-width="1.2"/><rect x="9" y="1" width="4" height="8" transform="rotate(40 11 5)" fill="#3a50a8"/>']
}

const Ic = (props) => {
  const e = icons[props.name]
  return h('svg', { width: e[0], height: e[0], viewBox: `0 0 ${e[0]} ${e[0]}`, innerHTML: e[1], style: 'display:block;flex:none' })
}
Ic.props = ['name']

const quickItems = [
  { w: 22, icon: 'logo' }, { t: 'sep', w: 6 }, { w: 20, icon: 'open' }, { t: 'sep', w: 8 },
  { w: 20, icon: 'save' }, { t: 'sep', w: 8 }, { w: 24, icon: 'undo' }, { t: 'caret', w: 12 }, { t: 'sep', w: 8 },
  { w: 24, icon: 'cut' }, { w: 22, icon: 'copy' }, { w: 22, icon: 'paste' }, { t: 'sep', w: 6 },
  { w: 22, icon: 'closeX' }, { t: 'caret', w: 12 }, { t: 'sep', w: 8 }, { w: 22, icon: 'brush' }, { t: 'sep', w: 6 },
  { w: 26, icon: 'winCube' }, { t: 'text', text: '窗口' }, { t: 'caret', w: 14 }, { w: 8, icon: 'lineCaret' }, { t: 'sep', w: 8 }
]

const tabs = ['主页', '曲线', '分析', '视图', '装配', '电极设计', '应用模块']

const groups = [
  {
    id: 'ins', label: '插入', w: 223, pad: 7, launcher: true,
    items: [
      { label: '创建刀具', icon: 'createTool', w: 63 },
      { label: '创建几何体', icon: 'createGeom', w: 63 },
      { label: '创建工序', icon: 'createOp', w: 63 },
      { w: 18, cols: '18px', grid: [{ icon: 'insA' }, { icon: 'insB' }] }
    ]
  },
  { id: 'op', label: '操作', w: 55, launcher: true, items: [{ label: '属性', icon: 'attr', w: 55, dim: true, caret: true }] },
  {
    id: 'proc', label: '工序', w: 330, pad: 8, launcher: true,
    items: [
      { label: '生成刀轨', icon: 'genPath', w: 57 },
      { label: '确认刀轨', icon: 'confirm', w: 57 },
      { label: '机床仿真', icon: 'sim', w: 57 },
      { label: '后处理', icon: 'post', w: 45 },
      { label: '车间文档', icon: 'doc', w: 56 },
      { label: '更多', icon: 'more', w: 50, caret: true, boxed: true }
    ]
  },
  {
    id: 'disp', label: '显示', w: 88, pad: 7, launcher: true,
    items: [{
      w: 76, cols: '38px 38px',
      grid: [{ icon: 'showA', caret: true }, { icon: 'showB', caret: true }, { icon: 'hatchA', on: true }, { icon: 'target' }, { icon: 'hatchB', on: true }, { icon: 'curve' }]
    }]
  },
  {
    id: 'wp', label: '工件', w: 142, pad: 8, launcher: true,
    items: [
      { w: 48, cols: '24px 24px', grid: [{ icon: 'blankA' }, { icon: 'blankB' }, { icon: 'blankA' }, { icon: 'blankB' }, { icon: 'blankA' }, { icon: 'blankB' }] },
      { label: '显示 3D IPW', icon: 'ipw', w: 80, caret: true }
    ]
  },
  { id: 'an', w: 44, items: [{ label: '分析', icon: 'analysis', w: 44, caret: true }] },
  { id: 'geo', w: 46, items: [{ label: '几何体', icon: 'plus', w: 46, caret: true }] },
  { id: 'gc', w: 78, items: [{ lines: ['加工工具 -', 'GC工具箱'], icon: 'gc', w: 78, caret: true }] },
  { id: 'sync', w: 59, items: [{ label: '同步建模', icon: 'sync', w: 59, caret: true }] },
  { id: 'feat', w: 43, items: [{ label: '特征', icon: 'feature', w: 43, caret: true }] },
  { id: 'dots', w: 39, items: [{ label: '...', icon: 'swap', w: 39, caret: true }] },
  { id: 'end', w: 23, last: true, launcher: true, items: [] }
]

const toolItems = [
  { t: 'sep', w: 10 }, { t: 'gap', w: 3 },
  { w: 24, icon: 'filtA' }, { w: 24, icon: 'filtB' }, { t: 'gap', w: 3 }, { w: 24, icon: 'filtC', on: true }, { w: 23, icon: 'filtD' },
  { t: 'sep', w: 16 }, { t: 'gap', w: 1 }, { w: 24, icon: 'filtE', on: true }, { w: 22, icon: 'filtF' }, { t: 'sep', w: 18 }, { t: 'gap', w: 3 },
  { t: 'select', w: 147, text: '无选择过滤器' }, { t: 'gap', w: 9 }, { t: 'select', w: 156, text: '整个装配' }, { t: 'gap', w: 7 },
  { w: 22, icon: 'gTool' }, { w: 24, icon: 'gFilter' }, { w: 24, icon: 'sFilter' }, { t: 'caret', w: 10 }, { w: 26, icon: 'rotSnap' },
  { w: 26, icon: 'binoc' }, { w: 22, icon: 'rectSel' }, { t: 'caret', w: 14 }, { w: 26, icon: 'eraser' }, { w: 24, icon: 'cubeOn', on: true },
  { t: 'sep', w: 14 }, { w: 26, icon: 'fitA' }, { w: 22, icon: 'pan' }, { w: 28, icon: 'rotate' }, { w: 26, icon: 'orient' }, { t: 'caret', w: 9 },
  { w: 28, icon: 'shade' }, { t: 'caret', w: 8 }, { w: 30, icon: 'bluecube' }, { t: 'caret', w: 6 }, { w: 30, icon: 'layer' }, { t: 'caret', w: 6 }, { t: 'sep', w: 22 }
]

const railItems = [
  { icon: 'railA' }, { icon: 'railB' }, { icon: 'railC' }, { icon: 'railD', active: true }, { icon: 'railE' }, { icon: 'railF' }, { icon: 'railG' },
  { icon: 'railH', cls: 'spaced' }, { icon: 'railI', cls: 'spaced' }, { icon: 'railJ', cls: 'spaced' }, { icon: 'railK' }
]

const operations = [
  { name: 'FACE_MILLING_AREA_1_COPY', icon: 'opFace', tool: '1', more: '1' },
  { name: 'FACE_MILLING_AREA_1', icon: 'opFace', tool: '1', more: '1' },
  { name: 'HOLE_MILLING', icon: 'opHole', tool: '1', more: '1' },
  { name: 'PECK_DRILLING', icon: 'opPeck', tool: 'SPOTDR...', more: '0' }
]

// toolpath over the front face: a meander of 18 top caps and 17 bottom caps
const fTop = (i) => (i <= 12 ? [476 + 28.3 * i, 490 + 7.06 * i] : [846.5 + 27.8 * (i - 13), 580.7 + 3 * (i - 13)])
const fBot = (i) => [527 + 27.3 * i, 613.5 + 2.85 * i]
const tTop = (j) => [977 + 27.2 * j, 363.5 + 2.8 * j]
const tLow = (j) => [858 + 27 * j, 593 + 2.7 * j]
const pt = (p, dx = 0, dy = 0) => `${(p[0] + dx).toFixed(1)} ${(p[1] + dy).toFixed(1)}`

const cyanFront = computed(() => {
  let d = `M${pt(fTop(0))}L513 611`
  for (let i = 0; i < 17; i++) {
    d += `M${pt(fTop(i), 14.5, 3.5)}L${pt(fBot(i))}M${pt(fBot(i), 13.5, 1.2)}L${pt(fTop(i + 1))}`
  }
  return d + `M${pt(fTop(17), 14.5, 3.5)}L991 663`
})

const cyanTeal = computed(() => {
  let d = `M${pt(tTop(0))}L846 595`
  for (let j = 0; j < 4; j++) {
    d += `M${pt(tTop(j), 13, 2)}L${pt(tLow(j))}M${pt(tLow(j), 14, 1.4)}L${pt(tTop(j + 1))}`
  }
  return d + `M${pt(tTop(4), 13, 2)}L966 603`
})

const greenCaps = computed(() => {
  let d = ''
  for (let i = 0; i < 18; i++) d += `M${pt(fTop(i))}l14.5 3.5`
  for (let i = 0; i < 17; i++) d += `M${pt(fBot(i))}l13.5 1.2`
  for (let j = 0; j < 5; j++) d += `M${pt(tTop(j))}l13 2`
  for (let j = 0; j < 4; j++) d += `M${pt(tLow(j))}l14 1.4`
  return d
})
</script>

<style scoped>
.nx-window {
  position: relative;
  width: 1172px;
  height: 845px;
  overflow: hidden;
  display: flex;
  flex-direction: column;
  background: #d6e2f3;
  font-family: "Noto Sans CJK SC", "Noto Sans", sans-serif;
  font-size: 12px;
  color: #111;
  border-top: 1px solid #8f8f8f;
  border-bottom: 2px solid #444;
  border-left: 1px solid #666;
  box-sizing: border-box;
}

.defs {
  position: absolute;
}

.titlebar {
  height: 30px;
  flex: none;
  display: flex;
  align-items: center;
  background: #fff;
}

.qat {
  display: flex;
  align-items: center;
  width: 548px;
  flex: none;
  padding-left: 2px;
  box-sizing: border-box;
}

.slot {
  display: flex;
  align-items: center;
  justify-content: center;
  flex: none;
  height: 24px;
  box-sizing: border-box;
}

.slot.on {
  background: #fddc94;
  border: 1px solid #d8a24c;
  border-radius: 3px;
}

.qsep {
  display: flex;
  justify-content: center;
  flex: none;
}

.qsep i {
  width: 1px;
  height: 22px;
  background: #888;
}

.qtext {
  width: 32px;
  flex: none;
  color: #333;
  font-size: 12px;
  white-space: nowrap;
}

.caret {
  display: block;
  width: 0;
  height: 0;
  border-left: 4px solid transparent;
  border-right: 4px solid transparent;
  border-top: 4px solid #1c1c1c;
}

.caret.sm {
  border-left-width: 3px;
  border-right-width: 3px;
  border-top: 3px solid #2c3f58;
}

.title {
  flex: 1;
  font-family: "Noto Sans", "Noto Sans CJK SC", sans-serif;
  font-size: 13px;
  letter-spacing: 0.14px;
  color: #333;
  white-space: nowrap;
}

.win-controls {
  display: flex;
  flex: none;
  padding-right: 1px;
}

.wc {
  width: 45px;
  height: 28px;
  display: flex;
  align-items: center;
  justify-content: center;
}

.tabbar {
  height: 30px;
  flex: none;
  display: flex;
  align-items: flex-end;
  background: #dce6f4;
}

.file-btn {
  width: 77px;
  height: 28px;
  box-sizing: border-box;
  display: flex;
  align-items: center;
  justify-content: center;
  color: #e0ecfa;
  text-shadow: 0 0 2px #1c3f78;
  border-radius: 2px 4px 0 0;
  background: linear-gradient(#5a82bc 0%, #6f9ad4 30%, #a9c8ec 55%, #4c98e0 85%, #3a88d8 100%);
  border-right: 1px solid #5a7aa8;
}

.tabs {
  display: flex;
  align-items: flex-end;
  margin-left: 6px;
  height: 29px;
}

.tab {
  padding: 0 13px;
  height: 28px;
  line-height: 27px;
  color: #24405f;
  box-sizing: border-box;
}

.tab.active {
  width: 45px;
  padding: 0;
  margin-right: 2px;
  margin-left: 0;
  text-align: center;
  background: linear-gradient(#fff, #f2f6fc);
  border: 1px solid #b4c4da;
  border-bottom: none;
  border-radius: 3px 3px 0 0;
}

.tab-right {
  margin-left: auto;
  display: flex;
  align-items: center;
  height: 30px;
  padding-right: 5px;
}

.search {
  width: 143px;
  height: 24px;
  box-sizing: border-box;
  border: 1px solid #a8b0bc;
  background: #fff;
  display: flex;
  align-items: center;
  justify-content: space-between;
  padding: 0 4px 0 4px;
  color: #9aa0ac;
}

.tr-ic {
  display: flex;
  align-items: center;
  justify-content: center;
  width: 26px;
  flex: none;
}

.tr-ic.first {
  margin-left: 5px;
  width: 24px;
}

.tr-ic.chev {
  width: 30px;
}

.tr-ic.help {
  width: 14px;
  height: 14px;
  margin: 0 3px 0 4px;
  border-radius: 50%;
  background: radial-gradient(circle at 40% 30%, #7a9cf0, #2a4ab8);
  color: #fff;
  font-weight: 700;
  font-size: 11px;
  line-height: 14px;
}

.tr-ic.hat {
  width: 20px;
}

.tut {
  margin-left: 8px;
  width: 27px;
  color: #24405f;
  white-space: nowrap;
}

.mini {
  width: 20px;
  height: 18px;
  margin-left: 2px;
  background: #f2f5fa;
  display: flex;
  align-items: center;
  justify-content: center;
  border-radius: 2px;
}

.ribbon {
  height: 95px;
  flex: none;
  display: flex;
  background: linear-gradient(#f3f7fc, #dce6f3 75%);
  border-top: 1px solid #b4c6de;
  box-sizing: border-box;
  border-bottom: 1px solid #a9b8cc;
}

.group {
  position: relative;
  flex: none;
  display: flex;
  flex-direction: column;
  padding: 3px 0 2px;
  box-sizing: border-box;
  border-right: 1px solid #c6d2e2;
  box-shadow: 1px 0 0 #f2f6fb;
  margin-right: 0;
}

.group.nosep {
  border-right: none;
  box-shadow: none;
}

.group-body {
  flex: 1;
  display: flex;
  align-items: flex-start;
  min-height: 0;
}

.big {
  position: relative;
  flex: none;
  display: flex;
  flex-direction: column;
  align-items: center;
  color: #24405f;
  white-space: nowrap;
}

.big.dim {
  color: #8c98a8;
}

.big-ic {
  height: 32px;
  display: flex;
  align-items: center;
  justify-content: center;
}

.big-ic.boxed {
  width: 38px;
  height: 34px;
  box-sizing: border-box;
  background: #e6ecf4;
  border: 1px solid #c4ccd8;
  border-radius: 3px;
  margin-bottom: -2px;
}

.big-label {
  margin-top: 4px;
  line-height: 18px;
  text-align: center;
}

.big.two .big-label {
  padding-right: 8px;
}

.big > .caret {
  margin-top: 5px;
}

.big.two > .caret {
  position: absolute;
  right: 5px;
  top: 52px;
  margin: 0;
}

.small-grid {
  display: grid;
  row-gap: 2px;
  flex: none;
  margin-top: -3px;
}

.cell {
  display: flex;
  align-items: center;
  height: 21px;
  gap: 4px;
  justify-content: center;
  box-sizing: border-box;
}

.cell.on {
  width: 23px;
  justify-self: center;
  background: #fddc94;
  border: 1px solid #d8a24c;
  border-radius: 3px;
}

.group-foot {
  height: 17px;
  flex: none;
  display: flex;
  align-items: center;
  color: #5a6a80;
}

.foot-label {
  flex: 1;
  text-align: center;
  padding-right: 0;
  white-space: nowrap;
}

.launcher {
  margin: 0 8px 0 8px;
}

.toolbar {
  height: 34px;
  flex: none;
  display: flex;
  align-items: center;
  background: #d8e3f2;
  position: relative;
}

.menu-btn {
  width: 85px;
  flex: none;
  display: flex;
  align-items: center;
  padding-left: 10px;
  box-sizing: border-box;
  color: #24405f;
  white-space: nowrap;
}

.menu-btn span {
  margin: 0 4px 0 3px;
}

.tsep {
  display: flex;
  justify-content: center;
  flex: none;
}

.tsep i {
  width: 2px;
  height: 26px;
  background: #f0f4fa;
}

.select {
  flex: none;
  height: 23px;
  box-sizing: border-box;
  background: #fff;
  border: 1px solid #555;
  display: flex;
  align-items: center;
  justify-content: space-between;
  padding: 0 4px 0 2px;
  color: #111;
}

.tb-end {
  margin-left: auto;
  margin-right: 7px;
  margin-top: 8px;
}

.workspace {
  flex: 1;
  min-height: 0;
  display: flex;
}

.rail {
  width: 32px;
  flex: none;
  background: #bdc9dd;
  display: flex;
  flex-direction: column;
  border-right: 0;
}

.gear {
  height: 43px;
  flex: none;
  display: flex;
  justify-content: center;
  padding-top: 5px;
  box-sizing: border-box;
}

.rail-btn {
  width: 27px;
  height: 41px;
  margin: 0 0 1px 4px;
  flex: none;
  background: #fafaff;
  display: flex;
  align-items: center;
  justify-content: center;
}

.rail-btn.active {
  width: 30px;
  height: 43px;
  margin: -1px 0 1px 2px;
}

.rail-btn.spaced {
  margin-top: 12px;
}

.rail-cut {
  width: 27px;
  height: 18px;
  margin-left: 4px;
  background: #fafaff;
  flex: none;
  overflow: hidden;
  border-radius: 0 0 8px 8px;
  border-bottom: 1px solid #8a94a4;
  box-sizing: border-box;
}

.rail-scroll {
  margin: 5px 0 0 8px;
  display: flex;
  flex-direction: column;
  gap: 1px;
}

.rs {
  width: 16px;
  height: 15px;
  box-sizing: border-box;
  background: #f0f0f0;
  border: 1px solid #888;
  border-color: #f8f8f8 #777 #777 #f8f8f8;
  display: flex;
  align-items: center;
  justify-content: center;
}

.navigator {
  width: 406px;
  flex: none;
  background: #d6e2f3;
  box-sizing: border-box;
  padding: 1px 10px 0 6px;
  display: flex;
  flex-direction: column;
  box-shadow: inset 0 1px 0 #f4f8fc;
}

.nav-head {
  height: 38px;
  flex: none;
  display: flex;
  align-items: flex-end;
  justify-content: space-between;
  padding: 0 5px 8px 5px;
  color: #222;
  box-sizing: border-box;
}

.tree {
  height: 579px;
  flex: none;
  box-sizing: border-box;
  background: #fff;
  border: 1px solid #a8a8a8;
  display: flex;
  flex-direction: column;
  font-family: "Noto Sans", "Noto Sans CJK SC", sans-serif;
  letter-spacing: 0.16px;
}

.tree-header {
  height: 21px;
  flex: none;
  display: flex;
  overflow: hidden;
  color: #222;
  letter-spacing: 0;
  font-family: "Noto Sans CJK SC", sans-serif;
}

.th {
  flex: none;
  line-height: 20px;
  box-sizing: border-box;
  border-right: 1px solid #e2e2e2;
  white-space: nowrap;
  overflow: hidden;
}

.th.name { width: 253px; padding-left: 7px; }
.th.path { width: 44px; padding-left: 6px; }
.th.tool { width: 65px; padding-left: 6px; }
.th.more { width: 26px; padding-left: 6px; border: none; }

.tree-body {
  position: relative;
  flex: 1;
  min-height: 0;
  padding-top: 0;
}

.tree-lines {
  position: absolute;
  left: 0;
  top: 0;
}

.vline {
  position: absolute;
  left: 253px;
  top: 0;
  bottom: 0;
  width: 1.4px;
  background: #000;
  z-index: 2;
}

.row {
  position: relative;
  height: 18px;
  display: flex;
  align-items: center;
  white-space: nowrap;
}

.label {
  margin-left: 3px;
}

.lv0 { padding-left: 1px; }
.lv1 { padding-left: 21px; }
.lv1 .label { margin-left: 2px; }
.lv1b { padding-left: 7px; }
.lv1b .label { margin-left: 1px; }
.lv2 { padding-left: 40px; }
.lv2 .label { margin-left: 2px; }

.minus {
  width: 8px;
  height: 8px;
  margin-right: 5px;
  flex: none;
  box-sizing: border-box;
  border: 1px solid #999;
  background: #fff;
  position: relative;
}

.minus::after {
  content: "";
  position: absolute;
  left: 1px;
  right: 1px;
  top: 2.5px;
  height: 1px;
  background: #444;
}

.op {
  padding-left: 41px;
}

.sel {
  flex: 1;
  height: 18px;
  display: flex;
  align-items: center;
  background: #3399ff;
  color: #fff;
  margin-right: 1px;
}

.op-name {
  width: 182px;
  flex: none;
  padding-left: 3px;
  box-sizing: border-box;
}

.op-path {
  width: 49px;
  flex: none;
  padding-left: 6px;
  box-sizing: border-box;
}

.op-tool {
  width: 65px;
  flex: none;
}

.hscroll {
  height: 17px;
  flex: none;
  margin: 0 1px 1px;
  background: #efefef;
  display: flex;
  align-items: center;
  padding: 0 5px;
  gap: 4px;
}

.track {
  flex: 1;
  height: 100%;
}

.thumb {
  width: 192px;
  height: 100%;
  background: #cdcdcd;
}

.grip {
  height: 8px;
  flex: none;
  background: #dde9f9;
  display: flex;
  justify-content: center;
  align-items: center;
  gap: 3px;
}

.grip i {
  width: 2px;
  height: 2px;
  background: #b4b8c0;
}

.viewport {
  flex: 1;
  min-width: 0;
  background: linear-gradient(#bcbdbf 0%, #d6d7d9 50%, #e5e6e9 85%, #e6e7ea 100%);
}

.scene {
  display: block;
}

.s-txt {
  font-family: "Liberation Sans", sans-serif;
  font-size: 12px;
}

.t-txt {
  font-family: "Liberation Sans", sans-serif;
  font-size: 11px;
}

.statusbar {
  height: 21px;
  flex: none;
  display: flex;
  background: linear-gradient(#dde7f4, #bfd0e6);
  box-shadow: 0 -1px 0 #f4f7fb;
}

.st {
  flex: none;
  box-sizing: border-box;
  border-right: 1px solid #a8a8a8;
  display: flex;
  align-items: center;
}

.st.one { width: 538px; }
.st.two { width: 538px; }
.st.three { width: 20px; }
.st.four { width: 56px; padding-left: 3px; }

.watermark {
  position: absolute;
  left: 859px;
  top: 734px;
  pointer-events: none;
}

.wm-big {
  font-family: "Noto Sans CJK SC", sans-serif;
  font-weight: 700;
  font-size: 44px;
  fill: #6cc4ec;
  stroke: #f2f6fa;
  stroke-width: 3px;
  paint-order: stroke;
}

.wm-small {
  font-family: "DejaVu Sans", sans-serif;
  font-weight: 700;
  font-size: 13px;
  fill: #6cc4ec;
  stroke: #f2f6fa;
  stroke-width: 2px;
  paint-order: stroke;
}
</style>

<style>
html, body {
  margin: 0;
  padding: 0;
  background: #d6e2f3;
}
</style>
